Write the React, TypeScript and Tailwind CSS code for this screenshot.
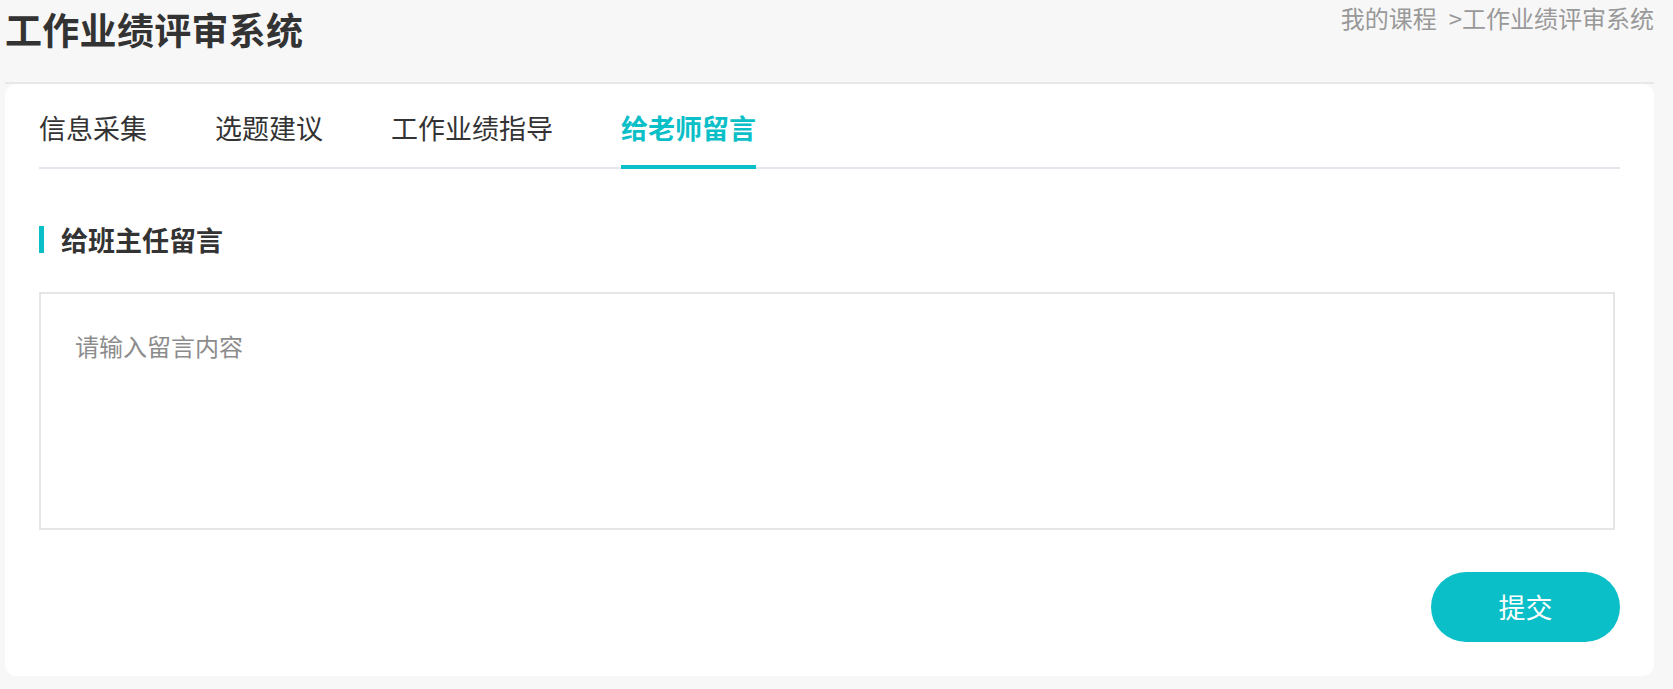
import { useState } from "react";

const tabs = ["信息采集", "选题建议", "工作业绩指导", "给老师留言"];

export default function App() {
  const [active, setActive] = useState(3);
  const [message, setMessage] = useState("");

  return (
    <div
      className="min-h-screen bg-[#f7f7f7] pl-[5px] pr-[19px] pb-[13px]"
      style={{ fontFamily: '"Noto Sans CJK SC", "Noto Sans", sans-serif' }}
    >
      <div className="flex justify-between items-start h-[82px]">
        <h1 className="pt-[3px] text-[37px] leading-[52px] font-bold text-[#333] tracking-[0.3px]">
          工作业绩评审系统
        </h1>
        <div className="text-[24px] leading-[36px] text-[#999]">
          我的课程<span className="ml-[12px]">&gt;</span>工作业绩评审系统
        </div>
      </div>

      <div className="border-t-2 border-[#e8e8e8]">
        <div className="bg-white rounded-[12px] px-[34px] pt-[26px] pb-[34px]">
          <div className="flex gap-[68px] border-b-2 border-[#e4e7ed]">
            {tabs.map((tab, i) => (
              <button
                key={tab}
                onClick={() => setActive(i)}
                className={
                  i === active
                    ? "text-[27px] leading-[36px] pb-[19px] -mb-[2px] border-b-4 border-[#0abfc8] text-[#0abfc8] font-bold"
                    : "text-[27px] leading-[36px] pb-[19px] -mb-[2px] border-b-4 border-transparent text-[#333]"
                }
              >
                {tab}
              </button>
            ))}
          </div>

          <div className="mt-[57px] border-l-[5px] border-[#0abfc8] pl-[17px] text-[27px] leading-[27px] font-bold text-[#333]">
            给班主任留言
          </div>

          <textarea
            value={message}
            onChange={(e) => setMessage(e.target.value)}
            placeholder="请输入留言内容"
            className="block mt-[39px] w-[1576px] h-[238px] border-2 border-[#e6e6e6] px-[34px] pt-[34px] text-[24px] leading-[36px] text-[#333] placeholder:text-[#8c8c8c] resize-none outline-none"
          />

          <div className="flex justify-end mt-[42px]">
            <button className="w-[189px] h-[70px] rounded-full bg-[#0abfc8] text-white text-[27px]">
              提交
            </button>
          </div>
        </div>
      </div>
    </div>
  );
}
